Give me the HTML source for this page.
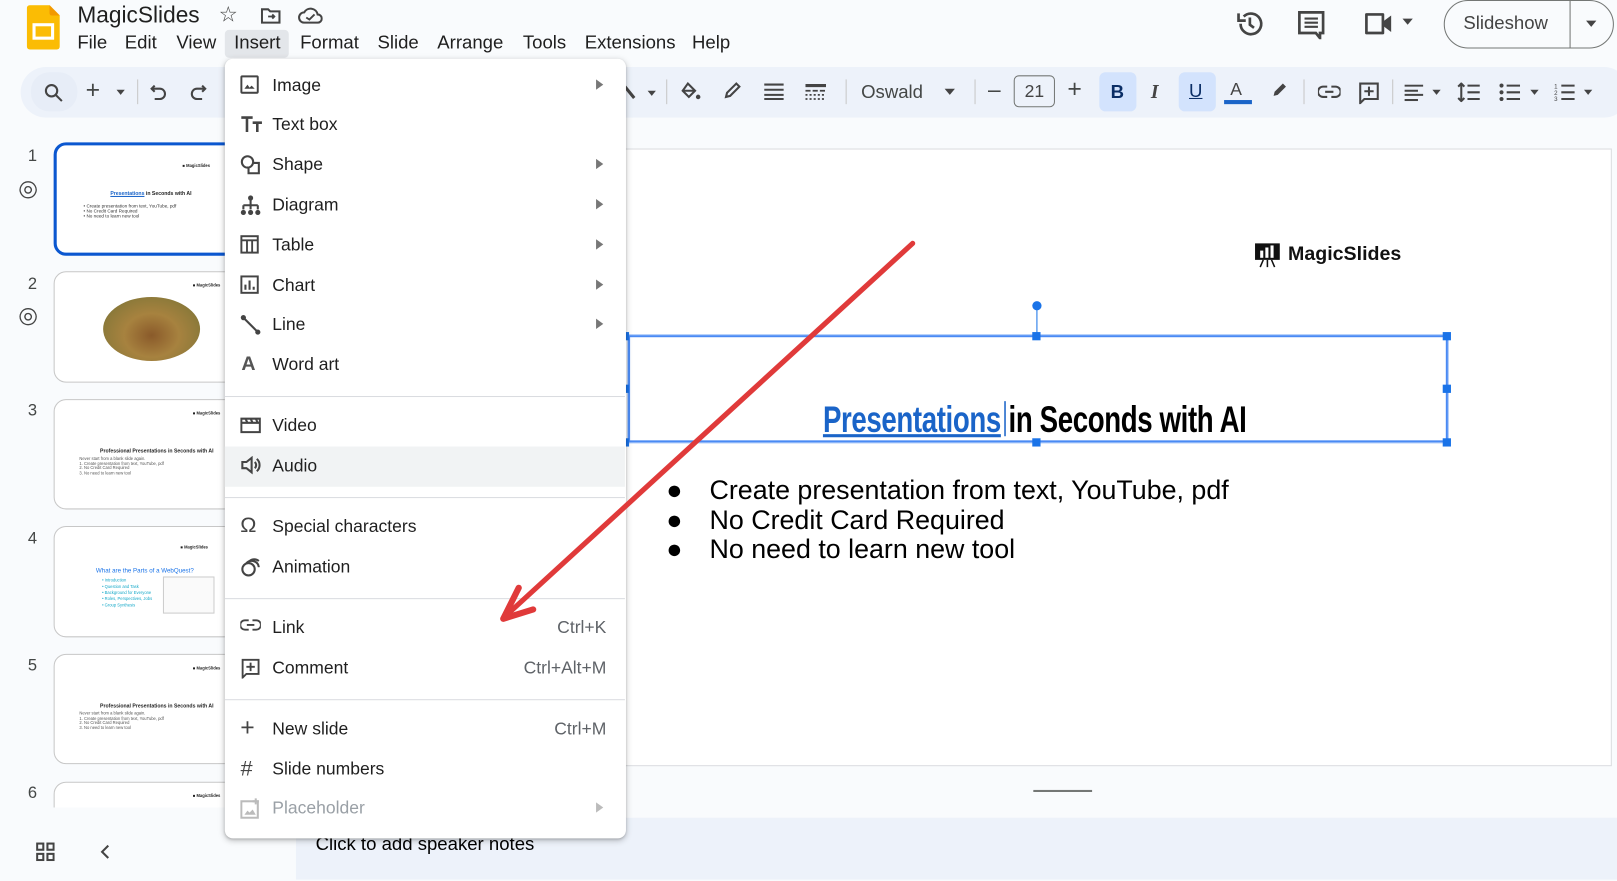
<!DOCTYPE html>
<html><head><meta charset="utf-8">
<style>
*{box-sizing:border-box;margin:0;padding:0}
html,body{width:1617px;height:881px;overflow:hidden;background:#f9fbfd;font-family:"Liberation Sans",Arial,sans-serif;color:#1f1f1f}
#w{position:absolute;left:0;top:0;width:1568px;height:854px;transform:scale(1.03125);transform-origin:0 0}
.a{position:absolute}
.menu span{position:absolute;font-size:18px}
.tb{position:absolute;font-size:18px;color:#444746;line-height:20px}
.thumb{position:absolute;left:52px;width:190px;background:#fff;border:1px solid #c7c7c7;border-radius:12px;overflow:hidden}
.num{position:absolute;left:27px;font-size:16px;color:#444746}
.mi{position:absolute;left:0;width:388px;height:39px}
.mi .t{position:absolute;left:46px;top:9px;font-size:17px;color:#1f1f1f}
.mi .k{position:absolute;right:18px;top:9px;font-size:17px;color:#5f6368}
.mi .ar{position:absolute;left:360px;top:13px;width:0;height:0;border-left:7px solid #777;border-top:5px solid transparent;border-bottom:5px solid transparent}
.mi svg{position:absolute;left:15px;top:9px}
.sep{position:absolute;left:0;width:388px;height:1px;background:#dadce0}
.h{position:absolute;width:8px;height:8px;background:#1a73e8}
</style></head><body><div id="w">

<svg class="a" style="left:26px;top:5px" width="32" height="43" viewBox="0 0 32 43"><path d="M3 0H22L32 10V40a3 3 0 0 1-3 3H3a3 3 0 0 1-3-3V3a3 3 0 0 1 3-3z" fill="#fbbc04"/><path d="M22 0L32 10H24a2 2 0 0 1-2-2z" fill="#f29900"/><rect x="7" y="19" width="18" height="13" fill="none" stroke="#fff" stroke-width="3"/></svg>
<div class="a" style="left:75px;top:2px;font-size:22px">MagicSlides</div>
<div class="a" style="left:212px;top:2px;font-size:21px;color:#444">☆</div>
<svg class="a" style="left:253px;top:7px" width="20" height="16" viewBox="0 0 20 16"><path d="M1 2h6l2 2h9v11H1z" fill="none" stroke="#444" stroke-width="2"/><path d="M7 9h6M11 7l2 2-2 2" stroke="#444" stroke-width="1.8" fill="none"/></svg>
<svg class="a" style="left:289px;top:7px" width="24" height="16" viewBox="0 0 24 16"><path d="M6 15a5 5 0 0 1 0-10 7 7 0 0 1 13 2 4 4 0 0 1 0 8z" fill="none" stroke="#444" stroke-width="2"/><path d="M8 10l3 2 5-5" stroke="#444" stroke-width="1.8" fill="none"/></svg>

<div class="a" style="left:218px;top:29px;width:62px;height:27px;background:#e3e6ea;border-radius:4px"></div>
<div class="menu" style="position:absolute;top:31px;left:0">
<span style="left:75px">File</span><span style="left:121px">Edit</span><span style="left:171px">View</span><span style="left:227px">Insert</span><span style="left:291px">Format</span><span style="left:366px">Slide</span><span style="left:424px">Arrange</span><span style="left:507px">Tools</span><span style="left:567px">Extensions</span><span style="left:671px">Help</span>
</div>

<svg class="a" style="left:1198px;top:9px" width="28" height="28" viewBox="0 0 28 28"><path d="M5 14a10 10 0 1 0 3-7" fill="none" stroke="#444" stroke-width="2.6"/><path d="M3 4v7h7" fill="none" stroke="#444" stroke-width="2.6"/><path d="M14 8v7l4 3" fill="none" stroke="#444" stroke-width="2.6"/></svg>
<svg class="a" style="left:1258px;top:10px" width="28" height="28" viewBox="0 0 28 28"><path d="M2 2h23v20h-3v5l-4-5H2z" fill="none" stroke="#444" stroke-width="2.6"/><path d="M7 8h13M7 12h13M7 16h13" stroke="#444" stroke-width="2"/></svg>
<svg class="a" style="left:1323px;top:12px" width="28" height="22" viewBox="0 0 28 22"><path d="M2 2h16v18H2z" fill="none" stroke="#444" stroke-width="2.6" stroke-linejoin="round"/><path d="M18 9l8-6v16l-8-6" fill="#444"/></svg>
<div class="a" style="left:1360px;top:18px;border-top:6px solid #444;border-left:5px solid transparent;border-right:5px solid transparent"></div>
<div class="a" style="left:1400px;top:0px;width:165px;height:47px;border:1px solid #747775;border-radius:24px"></div>
<div class="a" style="left:1522px;top:0;width:1px;height:47px;background:#747775"></div>
<div class="a" style="left:1419px;top:12px;font-size:18px;color:#444">Slideshow</div>
<div class="a" style="left:1538px;top:20px;border-top:6px solid #444;border-left:5px solid transparent;border-right:5px solid transparent"></div>

<div class="a" style="left:20px;top:65px;width:1560px;height:49px;background:#edf2fa;border-radius:25px"></div>
<div class="a" style="left:30px;top:70px;width:45px;height:38px;background:#e7edf7;border-radius:18px"></div>
<svg class="a" style="left:42px;top:80px" width="20" height="20" viewBox="0 0 20 20"><circle cx="8" cy="8" r="5.5" fill="none" stroke="#444" stroke-width="2"/><path d="M12 12l6 6" stroke="#444" stroke-width="2"/></svg>
<div class="tb" style="left:83px;top:78px;font-size:24px">+</div>
<div class="a" style="left:113px;top:87px;border-top:5px solid #444;border-left:4px solid transparent;border-right:4px solid transparent"></div>
<div class="a" style="left:133px;top:77px;width:1px;height:24px;background:#c7c7c7"></div>
<svg class="a" style="left:145px;top:81px" width="18" height="18" viewBox="0 0 18 18"><path d="M5 2L2 5l3 3M2 5h8a5 5 0 0 1 0 10H5" fill="none" stroke="#444" stroke-width="2"/></svg>
<svg class="a" style="left:183px;top:81px" width="18" height="18" viewBox="0 0 18 18"><path d="M13 2l3 3-3 3M16 5H8a5 5 0 0 0 0 10h5" fill="none" stroke="#444" stroke-width="2"/></svg>
<svg class="a" style="left:604px;top:82px" width="14" height="16" viewBox="0 0 14 16"><path d="M2 2l9 11" stroke="#444" stroke-width="3"/></svg>
<div class="a" style="left:628px;top:88px;border-top:5px solid #444;border-left:4px solid transparent;border-right:4px solid transparent"></div>
<div class="a" style="left:646px;top:77px;width:1px;height:24px;background:#c7c7c7"></div>
<svg class="a" style="left:659px;top:79px" width="22" height="20" viewBox="0 0 22 20"><path d="M8 2l7 7-6 6-6-6z" fill="none" stroke="#444" stroke-width="2"/><path d="M4 9h11z" stroke="#444" stroke-width="2"/><circle cx="18" cy="15" r="2.2" fill="#444"/></svg>
<svg class="a" style="left:701px;top:79px" width="18" height="18" viewBox="0 0 18 18"><path d="M3 15l1-4 9-9 3 3-9 9z" fill="none" stroke="#444" stroke-width="2"/></svg>
<svg class="a" style="left:741px;top:81px" width="19" height="17" viewBox="0 0 19 17"><path d="M0 1h19M0 6h19M0 11h19M0 15h19" stroke="#444" stroke-width="2"/></svg>
<svg class="a" style="left:781px;top:81px" width="20" height="17" viewBox="0 0 20 17"><path d="M0 2h20" stroke="#444" stroke-width="3"/><path d="M0 7h20" stroke="#444" stroke-width="1.6" stroke-dasharray="5 2"/><path d="M0 11h20M0 15h20" stroke="#444" stroke-width="1.6" stroke-dasharray="2 2"/></svg>
<div class="a" style="left:820px;top:77px;width:1px;height:24px;background:#c7c7c7"></div>
<div class="tb" style="left:835px;top:79px">Oswald</div>
<div class="a" style="left:916px;top:86px;border-top:6px solid #444;border-left:5px solid transparent;border-right:5px solid transparent"></div>
<div class="a" style="left:945px;top:77px;width:1px;height:24px;background:#c7c7c7"></div>
<div class="tb" style="left:958px;top:77px;font-size:22px">–</div>
<div class="a" style="left:983px;top:73px;width:40px;height:31px;border:1px solid #747775;border-radius:5px;text-align:center;font-size:17px;line-height:29px;color:#444">21</div>
<div class="tb" style="left:1035px;top:77px;font-size:24px">+</div>
<div class="a" style="left:1066px;top:70px;width:36px;height:38px;background:#d3e3fd;border-radius:6px"></div>
<div class="a" style="left:1077px;top:79px;font-size:18px;font-weight:bold;color:#0b2e66">B</div>
<div class="a" style="left:1116px;top:79px;font-size:19px;font-style:italic;font-family:'Liberation Serif',serif;font-weight:bold;color:#444">I</div>
<div class="a" style="left:1143px;top:70px;width:36px;height:38px;background:#d3e3fd;border-radius:6px"></div>
<div class="a" style="left:1153px;top:78px;font-size:18px;text-decoration:underline;color:#0b2e66">U</div>
<div class="a" style="left:1193px;top:77px;font-size:17px;color:#444">A</div>
<div class="a" style="left:1187px;top:97px;width:27px;height:4px;background:#1a64c8"></div>
<svg class="a" style="left:1232px;top:78px" width="18" height="18" viewBox="0 0 18 18"><path d="M3 15l1-4 8-8 3 3-8 8z" fill="#444"/></svg>
<div class="a" style="left:1264px;top:77px;width:1px;height:24px;background:#c7c7c7"></div>
<svg class="a" style="left:1278px;top:82px" width="22" height="14" viewBox="0 0 22 14"><path d="M9 2H5a5 5 0 0 0 0 10h4M13 2h4a5 5 0 0 1 0 10h-4M7 7h8" fill="none" stroke="#444" stroke-width="2"/></svg>
<svg class="a" style="left:1317px;top:79px" width="21" height="22" viewBox="0 0 21 22"><path d="M2 2h17v15H6l-4 4z" fill="none" stroke="#444" stroke-width="2"/><path d="M10.5 5v9M6 9.5h9" stroke="#444" stroke-width="2"/></svg>
<div class="a" style="left:1350px;top:77px;width:1px;height:24px;background:#c7c7c7"></div>
<svg class="a" style="left:1362px;top:82px" width="20" height="16" viewBox="0 0 20 16"><path d="M0 1h18M0 6h13M0 10h18M0 15h13" stroke="#444" stroke-width="2"/></svg>
<div class="a" style="left:1389px;top:87px;border-top:5px solid #444;border-left:4px solid transparent;border-right:4px solid transparent"></div>
<svg class="a" style="left:1413px;top:80px" width="22" height="19" viewBox="0 0 22 19"><path d="M4 1v17M1 4l3-3 3 3M1 15l3 3 3-3M10 3h12M10 9.5h12M10 16h12" fill="none" stroke="#444" stroke-width="2"/></svg>
<svg class="a" style="left:1454px;top:81px" width="20" height="17" viewBox="0 0 20 17"><circle cx="2" cy="2" r="2" fill="#444"/><circle cx="2" cy="8.5" r="2" fill="#444"/><circle cx="2" cy="15" r="2" fill="#444"/><path d="M7 2h13M7 8.5h13M7 15h13" stroke="#444" stroke-width="2"/></svg>
<div class="a" style="left:1484px;top:87px;border-top:5px solid #444;border-left:4px solid transparent;border-right:4px solid transparent"></div>
<svg class="a" style="left:1507px;top:80px" width="20" height="19" viewBox="0 0 20 19"><text x="0" y="6" font-size="6" fill="#444">1</text><text x="0" y="12" font-size="6" fill="#444">2</text><text x="0" y="18" font-size="6" fill="#444">3</text><path d="M7 3h13M7 9.5h13M7 16h13" stroke="#444" stroke-width="2"/></svg>
<div class="a" style="left:1536px;top:87px;border-top:5px solid #444;border-left:4px solid transparent;border-right:4px solid transparent"></div>

<div class="num" style="top:143px">1</div>
<div class="num" style="top:267px">2</div>
<div class="num" style="top:390px">3</div>
<div class="num" style="top:514px">4</div>
<div class="num" style="top:637px">5</div>
<div class="num" style="top:761px">6</div>
<div class="a" style="left:17px;top:170px;font-size:22px;color:#444;transform:rotate(-30deg)">◎</div>
<div class="a" style="left:17px;top:293px;font-size:22px;color:#444;transform:rotate(-30deg)">◎</div>
<div class="thumb" style="top:138px;height:110px;border:3px solid #0b57d0">
 <div class="a" style="left:122px;top:17px;font-size:4px;font-weight:bold">■ MagicSlides</div>
 <div class="a" style="left:52px;top:44px;font-size:5px;font-weight:bold"><span style="color:#1a64c8;text-decoration:underline">Presentations</span> in Seconds with AI</div>
 <div class="a" style="left:26px;top:56px;font-size:4.5px;line-height:5px;color:#333">• Create presentation from text, YouTube, pdf<br>• No Credit Card Required<br>• No need to learn new tool</div>
</div>
<div class="thumb" style="top:263px;height:108px">
 <div class="a" style="left:134px;top:10px;font-size:4px;font-weight:bold">■ MagicSlides</div>
 <div class="a" style="left:47px;top:24px;width:94px;height:62px;border-radius:50%;background:radial-gradient(ellipse at 50% 60%,#8a5a2a 0%,#a7823f 40%,#8e7a3a 70%,#5f6a30 100%)"></div>
</div>
<div class="thumb" style="top:387px;height:107px">
 <div class="a" style="left:134px;top:10px;font-size:4px;font-weight:bold">■ MagicSlides</div>
 <div class="a" style="left:44px;top:47px;font-size:5px;font-weight:bold">Professional Presentations in Seconds with AI</div>
 <div class="a" style="left:24px;top:55px;font-size:4px;line-height:4.5px;color:#555">Never start from a blank slide again.<br>1. Create presentation from text, YouTube, pdf<br>2. No Credit Card Required<br>3. No need to learn new tool</div>
</div>
<div class="thumb" style="top:510px;height:108px">
 <div class="a" style="left:122px;top:17px;font-size:4px;font-weight:bold">■ MagicSlides</div>
 <div class="a" style="left:40px;top:40px;font-size:6px;color:#1a73e8">What are the Parts of a WebQuest?</div>
 <div class="a" style="left:46px;top:49px;font-size:4px;line-height:6px;color:#13a8c8">• Introduction<br>• Question and Task<br>• Background for Everyone<br>• Roles, Perspectives, Jobs<br>• Group Synthesis</div>
 <div class="a" style="left:105px;top:48px;width:50px;height:36px;border:1px solid #ccc;background:#fafafa"></div>
</div>
<div class="thumb" style="top:634px;height:107px">
 <div class="a" style="left:134px;top:10px;font-size:4px;font-weight:bold">■ MagicSlides</div>
 <div class="a" style="left:44px;top:47px;font-size:5px;font-weight:bold">Professional Presentations in Seconds with AI</div>
 <div class="a" style="left:24px;top:55px;font-size:4px;line-height:4.5px;color:#555">Never start from a blank slide again.<br>1. Create presentation from text, YouTube, pdf<br>2. No Credit Card Required<br>3. No need to learn new tool</div>
</div>
<div class="thumb" style="top:758px;height:40px"><div class="a" style="left:134px;top:10px;font-size:4px;font-weight:bold">■ MagicSlides</div></div>
<div class="a" style="left:0;top:783px;width:287px;height:71px;background:#f9fbfd"></div>
<svg class="a" style="left:35px;top:817px" width="18" height="18" viewBox="0 0 18 18"><g fill="none" stroke="#444" stroke-width="2"><rect x="1" y="1" width="6" height="6"/><rect x="11" y="1" width="6" height="6"/><rect x="1" y="11" width="6" height="6"/><rect x="11" y="11" width="6" height="6"/></g></svg>
<svg class="a" style="left:97px;top:818px" width="10" height="16" viewBox="0 0 10 16"><path d="M8 2L2 8l6 6" fill="none" stroke="#444" stroke-width="2"/></svg>

<div class="a" style="left:560px;top:144px;width:1003px;height:599px;background:#fff;border:1px solid #dadce0"></div>
<div class="a" style="left:1002px;top:766px;width:57px;height:2px;background:#747775"></div>
<div class="a" style="left:287px;top:793px;width:1290px;height:60px;background:#edf2fa;border-radius:14px 0 0 0"></div>
<div class="a" style="left:306px;top:808px;font-size:18px;color:#000">Click to add speaker notes</div>

<svg class="a" style="left:1216px;top:235px" width="26" height="25" viewBox="0 0 26 25"><rect x="1" y="1" width="24" height="16" fill="#111"/><rect x="6" y="8" width="3" height="7" fill="#fff"/><rect x="11" y="5" width="3" height="10" fill="#fff"/><rect x="16" y="3" width="3" height="12" fill="#fff"/><path d="M9 17l-3 7M13 17v7M17 17l3 7" stroke="#111" stroke-width="1.5"/></svg>
<div class="a" style="left:1249px;top:236px;font-size:19px;font-weight:bold;color:#111">MagicSlides</div>

<div class="a" style="left:1005px;top:299px;width:1px;height:27px;background:#1a73e8"></div>
<div class="a" style="left:1001px;top:292px;width:9px;height:9px;border-radius:50%;background:#1a73e8"></div>
<div class="a" style="left:609px;top:325px;width:795px;height:104px;border:2px solid #4a8af4;box-shadow:0 0 0 1px #aecbfa"></div>
<div class="h" style="left:605px;top:322px;width:5px"></div><div class="h" style="left:1001px;top:322px"></div><div class="h" style="left:1399px;top:322px"></div>
<div class="h" style="left:605px;top:373px;width:5px"></div><div class="h" style="left:1399px;top:373px"></div>
<div class="h" style="left:605px;top:425px;width:5px"></div><div class="h" style="left:1001px;top:425px"></div><div class="h" style="left:1399px;top:425px"></div>

<div class="a" style="left:798px;top:386px;width:414px;height:40px;overflow:visible">
 <div style="transform:scaleX(0.745);transform-origin:0 0;white-space:nowrap;font-size:36px;font-weight:bold;color:#000;letter-spacing:-0.5px"><span style="color:#1a64c8;text-decoration:underline">Presentations</span><span style="display:inline-block;width:2px;height:34px;background:#1a64c8;vertical-align:-4px;margin:0 4px"></span>in Seconds with AI</div>
</div>
<div class="a" style="left:646px;top:461px;font-size:26px;line-height:28.5px;color:#000">●<br>●<br>●</div>
<div class="a" style="left:688px;top:461px;font-size:26px;line-height:28.5px;color:#000;white-space:nowrap">Create presentation from text, YouTube, pdf<br>No Credit Card Required<br>No need to learn new tool</div>

<div class="a" style="left:218px;top:57px;width:389px;height:756px;background:#fff;border-radius:8px;box-shadow:0 2px 6px rgba(0,0,0,.25),0 1px 2px rgba(0,0,0,.15)">
 <div class="mi" style="top:7px"><svg width="18" height="18" viewBox="0 0 18 18"><rect x="1" y="1" width="16" height="16" rx="1" fill="none" stroke="#444" stroke-width="2"/><path d="M4 13l3-4 2 3 2-2 3 3z" fill="#444"/></svg><span class="t">Image</span><span class="ar"></span></div>
 <div class="mi" style="top:45px"><svg width="22" height="18" viewBox="0 0 22 18"><path d="M1 3h11M6.5 3v14M12 8h9M16.5 8v9" stroke="#444" stroke-width="2.5"/></svg><span class="t">Text box</span></div>
 <div class="mi" style="top:84px"><svg width="20" height="20" viewBox="0 0 20 20"><circle cx="7" cy="7" r="5.5" fill="none" stroke="#444" stroke-width="2"/><path d="M13 8h5v10H8v-5" fill="none" stroke="#444" stroke-width="2"/></svg><span class="t">Shape</span><span class="ar"></span></div>
 <div class="mi" style="top:123px"><svg width="20" height="20" viewBox="0 0 20 20"><circle cx="10" cy="3" r="2.5" fill="#444"/><path d="M10 5v5M3 10h14M3 10v4M10 10v4M17 10v4" stroke="#444" stroke-width="2"/><circle cx="3" cy="17" r="2.5" fill="#444"/><circle cx="10" cy="17" r="2.5" fill="#444"/><circle cx="17" cy="17" r="2.5" fill="#444"/></svg><span class="t">Diagram</span><span class="ar"></span></div>
 <div class="mi" style="top:162px"><svg width="18" height="18" viewBox="0 0 18 18"><rect x="1" y="1" width="16" height="16" fill="none" stroke="#444" stroke-width="2"/><path d="M1 5h16M6.5 5v12M11.5 5v12" stroke="#444" stroke-width="1.8"/></svg><span class="t">Table</span><span class="ar"></span></div>
 <div class="mi" style="top:201px"><svg width="18" height="18" viewBox="0 0 18 18"><rect x="1" y="1" width="16" height="16" fill="none" stroke="#444" stroke-width="2"/><path d="M5 14V9M9 14V5M13 14v-3" stroke="#444" stroke-width="2"/></svg><span class="t">Chart</span><span class="ar"></span></div>
 <div class="mi" style="top:239px"><svg width="20" height="20" viewBox="0 0 20 20"><path d="M3 3l14 14" stroke="#444" stroke-width="2"/><circle cx="3" cy="3" r="2.5" fill="#444"/><circle cx="17" cy="17" r="2.5" fill="#444"/></svg><span class="t">Line</span><span class="ar"></span></div>
 <div class="mi" style="top:278px"><span style="position:absolute;left:16px;top:8px;font-size:19px;font-weight:bold;color:#555">A</span><span class="t">Word art</span></div>
 <div class="sep" style="top:327px"></div>
 <div class="mi" style="top:337px"><svg width="20" height="18" viewBox="0 0 20 18"><path d="M1 3h18v13H1zM1 7h18M5 3l2 4M10 3l2 4M15 3l2 4" fill="none" stroke="#444" stroke-width="2"/></svg><span class="t">Video</span></div>
 <div class="a" style="left:0;top:376px;width:388px;height:39px;background:#f1f3f4"></div>
 <div class="mi" style="top:376px"><svg width="20" height="18" viewBox="0 0 20 18"><path d="M2 6h4l5-4v14l-5-4H2z" fill="none" stroke="#444" stroke-width="2"/><path d="M14 6a4 4 0 0 1 0 6M16 3a8 8 0 0 1 0 12" fill="none" stroke="#444" stroke-width="2"/></svg><span class="t">Audio</span></div>
 <div class="sep" style="top:425px"></div>
 <div class="mi" style="top:435px"><span style="position:absolute;left:15px;top:6px;font-size:21px;color:#444">Ω</span><span class="t">Special characters</span></div>
 <div class="mi" style="top:474px"><svg width="20" height="20" viewBox="0 0 20 20"><circle cx="8" cy="12" r="6" fill="none" stroke="#444" stroke-width="2"/><path d="M6 6a7 7 0 0 1 12 4M9 4a7 7 0 0 1 9 0" fill="none" stroke="#444" stroke-width="2"/></svg><span class="t">Animation</span></div>
 <div class="sep" style="top:523px"></div>
 <div class="mi" style="top:533px"><svg width="20" height="14" viewBox="0 0 22 14"><path d="M9 2H5a5 5 0 0 0 0 10h4M13 2h4a5 5 0 0 1 0 10h-4M7 7h8" fill="none" stroke="#444" stroke-width="2"/></svg><span class="t">Link</span><span class="k">Ctrl+K</span></div>
 <div class="mi" style="top:572px"><svg width="20" height="20" viewBox="0 0 21 22"><path d="M2 2h17v15H6l-4 4z" fill="none" stroke="#444" stroke-width="2"/><path d="M10.5 5v9M6 9.5h9" stroke="#444" stroke-width="2"/></svg><span class="t">Comment</span><span class="k">Ctrl+Alt+M</span></div>
 <div class="sep" style="top:621px"></div>
 <div class="mi" style="top:631px"><span style="position:absolute;left:15px;top:4px;font-size:24px;color:#444">+</span><span class="t">New slide</span><span class="k">Ctrl+M</span></div>
 <div class="mi" style="top:670px"><span style="position:absolute;left:15px;top:7px;font-size:21px;color:#444;font-style:italic">#</span><span class="t">Slide numbers</span></div>
 <div class="mi" style="top:708px"><svg width="20" height="20" viewBox="0 0 20 20"><rect x="1" y="3" width="16" height="16" fill="none" stroke="#bbb" stroke-width="2"/><path d="M4 16l3-4 2 2 3-3 3 5z" fill="#bbb"/><path d="M15 0v6M12 3h6" stroke="#bbb" stroke-width="2"/></svg><span class="t" style="color:#9aa0a6">Placeholder</span><span class="ar" style="border-left-color:#bbb"></span></div>
</div>

<svg class="a" style="left:0;top:0" width="1568" height="854"><path d="M885 236L495 593" stroke="#e03a3a" stroke-width="5" stroke-linecap="round"/><path d="M488 600L503 570M488 600L517 591" stroke="#e03a3a" stroke-width="6" stroke-linecap="round"/></svg>

</div></body></html>
